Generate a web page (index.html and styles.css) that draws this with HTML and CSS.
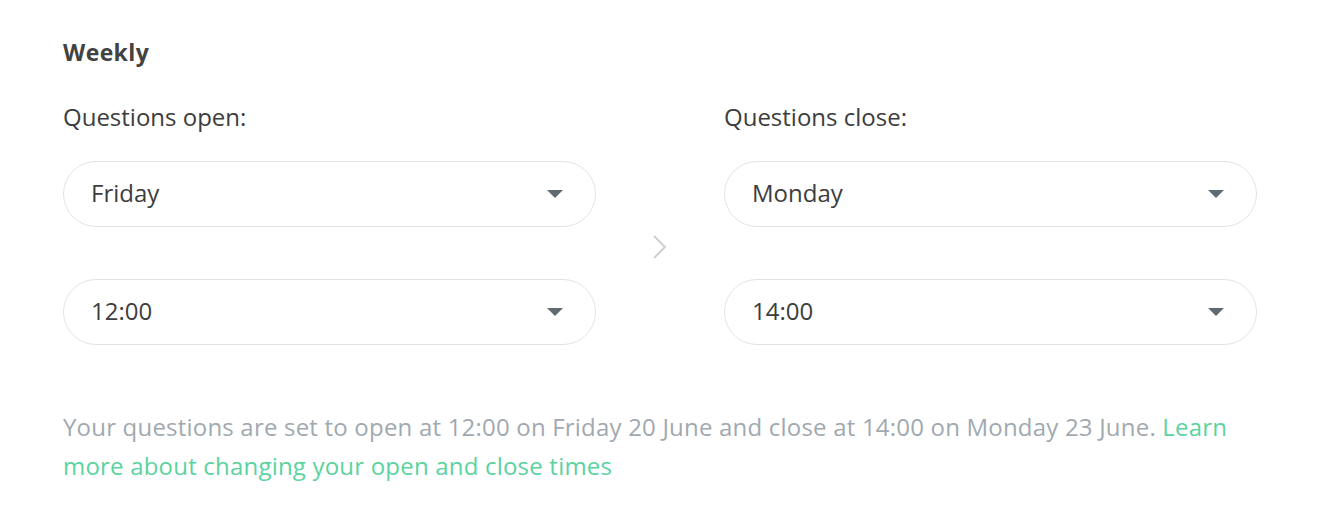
FILE: index.html
```html
<!DOCTYPE html>
<html lang="en">
<head>
<meta charset="utf-8">
<title>Weekly schedule</title>
<link rel="stylesheet" href="styles.css">
</head>
<body>
<div class="page">
  <h2 class="title">Weekly</h2>
  <div class="schedule">
    <div class="column">
      <div class="label">Questions open:</div>
      <div class="select"><span>Friday</span><span class="caret"></span></div>
      <div class="select"><span>12:00</span><span class="caret"></span></div>
    </div>
    <div class="divider">
      <svg class="chevron" width="16" height="26" viewBox="0 0 16 26" aria-hidden="true">
        <polyline points="2,2 13,13 2,24" fill="none" stroke="#cfcfcf" stroke-width="2"/>
      </svg>
    </div>
    <div class="column">
      <div class="label">Questions close:</div>
      <div class="select"><span>Monday</span><span class="caret"></span></div>
      <div class="select"><span>14:00</span><span class="caret"></span></div>
    </div>
  </div>
  <p class="summary">Your questions are set to open at 12:00 on Friday 20 June and close at 14:00 on Monday 23 June. <a class="link" href="#">Learn more about changing your open and close times</a></p>
</div>
</body>
</html>
```
FILE: styles.css
```css
html, body {
  margin: 0;
  padding: 0;
  background: #ffffff;
}
body {
  font-family: "Open Sans", "Liberation Sans", sans-serif;
  color: #3d3d3d;
}
.page {
  width: 1194px;
  padding: 36px 0 0 63px;
}
.title {
  margin: 0;
  font-size: 23px;
  line-height: 32px;
  font-weight: 700;
  letter-spacing: 0.4px;
  color: #424242;
}
.schedule {
  display: grid;
  grid-template-columns: 533px 128px 533px;
  margin-top: 33px;
}
.column {
  display: flex;
  flex-direction: column;
}
.label {
  font-size: 24px;
  line-height: 32px;
  color: #3d3d3d;
}
.select {
  box-sizing: border-box;
  height: 66px;
  border: 1px solid #e3e3e3;
  border-radius: 33px;
  padding: 0 32px 0 27px;
  display: flex;
  align-items: center;
  justify-content: space-between;
  font-size: 24px;
  line-height: 32px;
  color: #3d3d3d;
  margin-top: 52px;
}
.label + .select {
  margin-top: 28px;
}
.select span:first-child {
  margin-top: -2px;
}
.caret {
  width: 0;
  height: 0;
  border-left: 8px solid transparent;
  border-right: 8px solid transparent;
  border-top: 8px solid #5f6a71;
}
.divider {
  display: flex;
  align-items: flex-end;
  justify-content: center;
  padding-bottom: 85px;
}
.summary {
  margin: 62px 0 0;
  font-size: 24px;
  line-height: 39px;
  letter-spacing: 0.2px;
  color: #a1a9b0;
}
.link {
  color: #5bd39f;
  text-decoration: none;
}
```
